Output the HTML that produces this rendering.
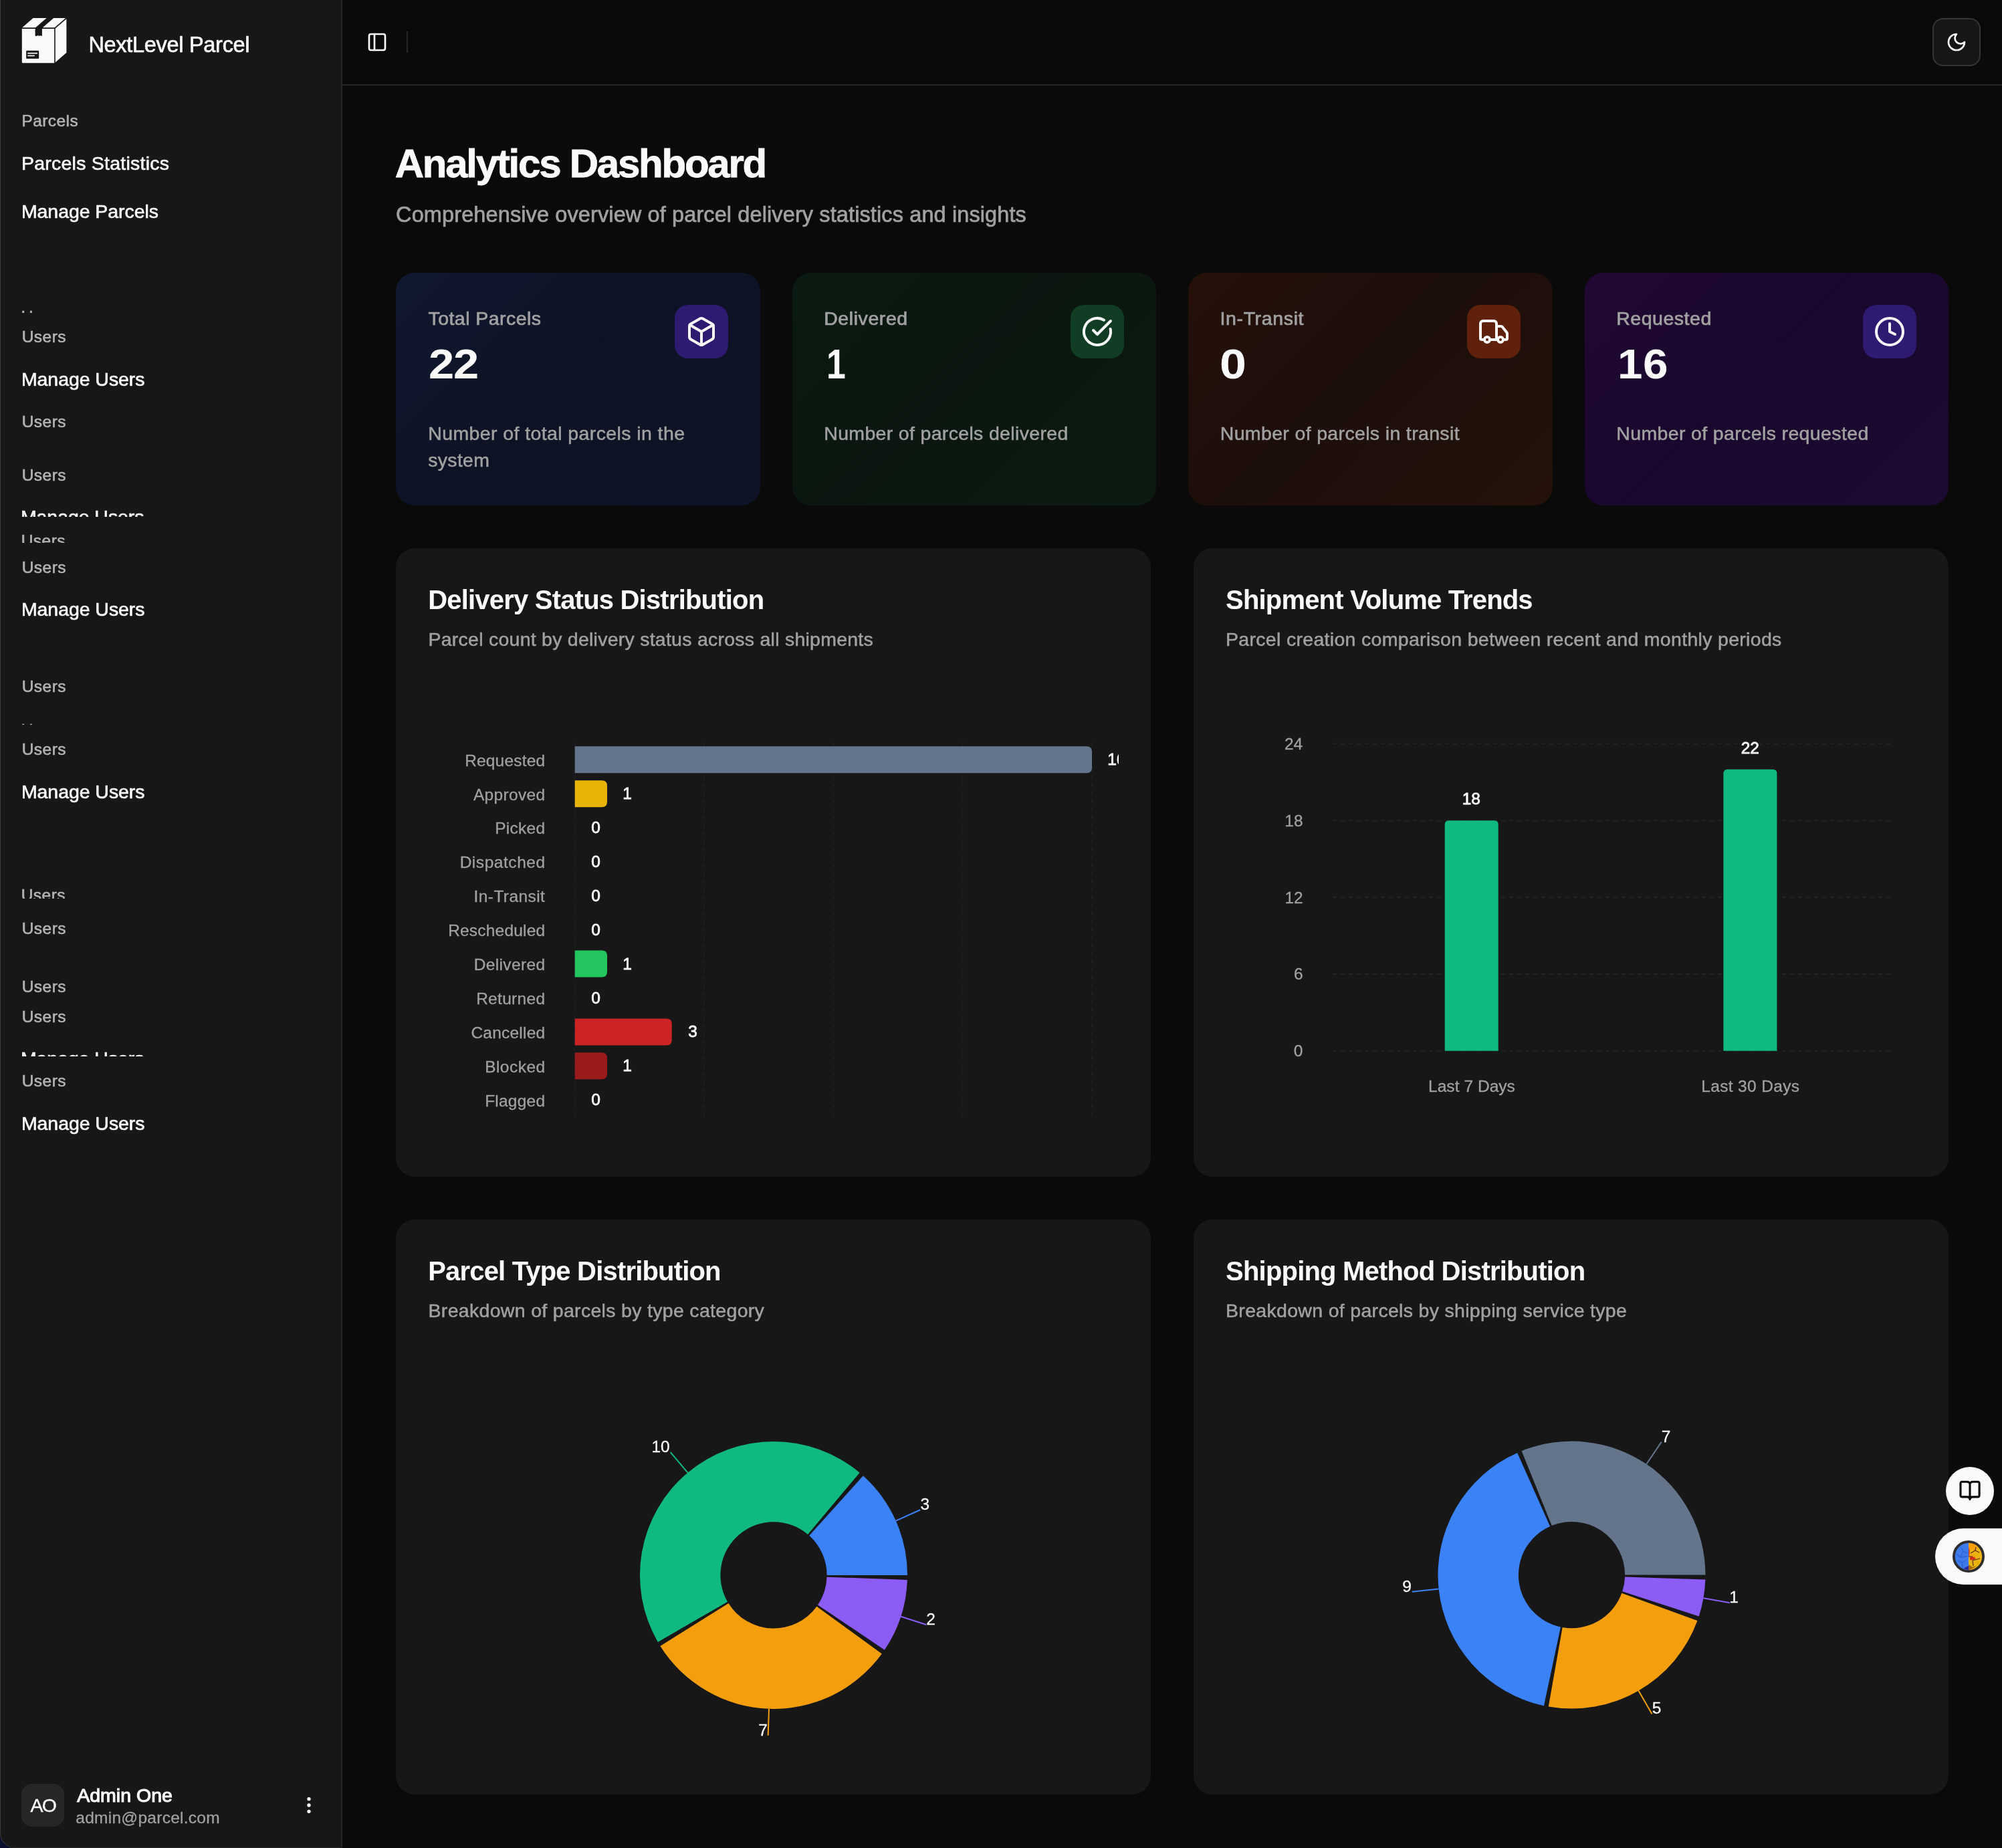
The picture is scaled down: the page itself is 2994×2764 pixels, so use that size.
<!DOCTYPE html>
<html lang="en">
<head>
<meta charset="utf-8">
<title>NextLevel Parcel - Analytics Dashboard</title>
<style>
*{box-sizing:border-box;margin:0;padding:0}
html,body{width:2994px;height:2764px;background:#0a0a0a}
body{overflow:hidden}
body{position:relative;will-change:transform;font-family:"Liberation Sans",Arial,Helvetica,sans-serif;color:#fafafa;-webkit-font-smoothing:antialiased}
.t{position:absolute;white-space:nowrap;margin:0;font-weight:400}
.abs{position:absolute}
aside{position:absolute;left:0;top:0;width:512px;height:2764px;background:#171717;border-right:2px solid #262626;border-left:1px solid #3a3a3a;border-bottom:1px solid #2c2c2c;border-bottom-left-radius:22px;overflow:hidden}
aside>*,aside nav>*{margin-left:-1px}
header{position:absolute;left:512px;top:0;width:2482px;height:128px;border-bottom:2px solid #262626}
main{position:absolute;left:0;top:0;width:2994px;height:2764px}
.card{position:absolute;border-radius:28px;overflow:hidden}
.chart{background:#171717}
svg{position:absolute;left:0;top:0;overflow:visible}
svg text{font-family:"Liberation Sans",Arial,Helvetica,sans-serif}
</style>
</head>
<body>
<div class="abs" style="left:0;top:2738px;width:26px;height:26px;background:#0c1130"></div>
<aside>
<svg class="abs" style="left:32px;top:26px" width="70" height="70" viewBox="0 0 70 70" aria-hidden="true">
<path d="M1.3 15.3 L17.5 1 L37.6 1 L21.2 15.3 Z" fill="#fafafa"/>
<path d="M31.8 15.3 L48.2 1 L66.2 1 L49.7 15.3 Z" fill="#fafafa"/>
<path d="M0.8 17 L20.6 17 L20.6 27.6 L22.4 27.9 L24.6 26.9 L26.8 27.8 L29.2 27.3 L30.9 27.9 L30.9 17 L49.2 17 L49.2 68.2 L2.3 68.2 Q0.8 68.2 0.8 66.7 Z" fill="#fafafa"/>
<path d="M50.8 16.6 L67.4 2.3 L67.4 52.7 L50.8 67.3 Z" fill="#fafafa"/>
<rect x="7.2" y="49.7" width="19" height="12" rx="1" fill="#171717"/>
<rect x="9" y="52.8" width="15.2" height="1.7" rx="0.8" fill="#fafafa"/>
<rect x="9" y="56.6" width="11" height="1.7" rx="0.8" fill="#fafafa"/>
</svg>
<div class="t" style="left:131.40px;top:50.79px;font-size:32.5px;line-height:32.5px;color:#fafafa;letter-spacing:-0.299px;-webkit-text-stroke:0.6px #fafafa;">NextLevel Parcel</div>
<nav>
<div class="t" style="left:31.54px;top:168.76px;font-size:24.5px;line-height:24.5px;color:#b3b3b3;letter-spacing:0.402px;-webkit-text-stroke:0.6px #b3b3b3;">Parcels</div>
<a class="t" style="left:30.92px;top:229.67px;font-size:28.5px;line-height:28.5px;color:#fafafa;letter-spacing:0.244px;-webkit-text-stroke:0.6px #fafafa;">Parcels Statistics</a>
<a class="t" style="left:30.92px;top:301.67px;font-size:28.5px;line-height:28.5px;color:#fafafa;letter-spacing:-0.072px;-webkit-text-stroke:0.6px #fafafa;">Manage Parcels</a>
<div class="abs" style="left:0;top:460px;width:500px;height:8px;overflow:hidden"><div class="t" style="left:31.66px;top:2.26px;font-size:24.5px;line-height:24.5px;color:#b3b3b3;letter-spacing:0.488px;-webkit-text-stroke:0.6px #b3b3b3;">Users</div></div>
<div class="t" style="left:31.66px;top:492.26px;font-size:24.5px;line-height:24.5px;color:#b3b3b3;letter-spacing:0.488px;-webkit-text-stroke:0.6px #b3b3b3;">Users</div>
<a class="t" style="left:30.92px;top:553.37px;font-size:28.5px;line-height:28.5px;color:#fafafa;letter-spacing:-0.065px;-webkit-text-stroke:0.6px #fafafa;">Manage Users</a>
<div class="t" style="left:31.66px;top:618.66px;font-size:24.5px;line-height:24.5px;color:#b3b3b3;letter-spacing:0.488px;-webkit-text-stroke:0.6px #b3b3b3;">Users</div>
<div class="t" style="left:31.66px;top:698.66px;font-size:24.5px;line-height:24.5px;color:#b3b3b3;letter-spacing:0.488px;-webkit-text-stroke:0.6px #b3b3b3;">Users</div>
<div class="abs" style="left:0;top:760px;width:500px;height:12.5px;overflow:hidden"><a class="t" style="left:30.92px;top:-1.13px;font-size:28.5px;line-height:28.5px;color:#fafafa;letter-spacing:-0.065px;-webkit-text-stroke:0.6px #fafafa;">Manage Users</a></div>
<div class="abs" style="left:0;top:796px;width:500px;height:16.299999999999955px;overflow:hidden"><div class="t" style="left:31.66px;top:0.76px;font-size:24.5px;line-height:24.5px;color:#b3b3b3;letter-spacing:0.488px;-webkit-text-stroke:0.6px #b3b3b3;">Users</div></div>
<div class="t" style="left:31.66px;top:837.06px;font-size:24.5px;line-height:24.5px;color:#b3b3b3;letter-spacing:0.488px;-webkit-text-stroke:0.6px #b3b3b3;">Users</div>
<a class="t" style="left:30.92px;top:897.47px;font-size:28.5px;line-height:28.5px;color:#fafafa;letter-spacing:-0.065px;-webkit-text-stroke:0.6px #fafafa;">Manage Users</a>
<div class="t" style="left:31.66px;top:1015.26px;font-size:24.5px;line-height:24.5px;color:#b3b3b3;letter-spacing:0.488px;-webkit-text-stroke:0.6px #b3b3b3;">Users</div>
<div class="abs" style="left:0;top:1078px;width:500px;height:6px;overflow:hidden"><div class="t" style="left:31.66px;top:1.86px;font-size:24.5px;line-height:24.5px;color:#b3b3b3;letter-spacing:0.488px;-webkit-text-stroke:0.6px #b3b3b3;">Users</div></div>
<div class="t" style="left:31.66px;top:1108.66px;font-size:24.5px;line-height:24.5px;color:#b3b3b3;letter-spacing:0.488px;-webkit-text-stroke:0.6px #b3b3b3;">Users</div>
<a class="t" style="left:30.92px;top:1169.67px;font-size:28.5px;line-height:28.5px;color:#fafafa;letter-spacing:-0.065px;-webkit-text-stroke:0.6px #fafafa;">Manage Users</a>
<div class="abs" style="left:0;top:1326px;width:500px;height:18px;overflow:hidden"><div class="t" style="left:31.66px;top:1.26px;font-size:24.5px;line-height:24.5px;color:#b3b3b3;letter-spacing:0.488px;-webkit-text-stroke:0.6px #b3b3b3;">Users</div></div>
<div class="t" style="left:31.66px;top:1376.86px;font-size:24.5px;line-height:24.5px;color:#b3b3b3;letter-spacing:0.488px;-webkit-text-stroke:0.6px #b3b3b3;">Users</div>
<div class="t" style="left:31.66px;top:1464.26px;font-size:24.5px;line-height:24.5px;color:#b3b3b3;letter-spacing:0.488px;-webkit-text-stroke:0.6px #b3b3b3;">Users</div>
<div class="t" style="left:31.66px;top:1508.66px;font-size:24.5px;line-height:24.5px;color:#b3b3b3;letter-spacing:0.488px;-webkit-text-stroke:0.6px #b3b3b3;">Users</div>
<div class="abs" style="left:0;top:1570px;width:500px;height:10px;overflow:hidden"><a class="t" style="left:30.92px;top:-1.03px;font-size:28.5px;line-height:28.5px;color:#fafafa;letter-spacing:-0.065px;-webkit-text-stroke:0.6px #fafafa;">Manage Users</a></div>
<div class="t" style="left:31.66px;top:1605.26px;font-size:24.5px;line-height:24.5px;color:#b3b3b3;letter-spacing:0.488px;-webkit-text-stroke:0.6px #b3b3b3;">Users</div>
<a class="t" style="left:30.92px;top:1665.97px;font-size:28.5px;line-height:28.5px;color:#fafafa;letter-spacing:-0.065px;-webkit-text-stroke:0.6px #fafafa;">Manage Users</a>
</nav>
<div class="abs" style="left:32px;top:2668px;width:64px;height:64px;border-radius:16px;background:#262626"></div>
<div class="t" style="left:44.60px;top:2685.87px;font-size:28.5px;line-height:28.5px;color:#fafafa;letter-spacing:-1.758px;-webkit-text-stroke:0.4px #fafafa;">AO</div>
<div class="t" style="left:114.20px;top:2670.67px;font-size:28.5px;line-height:28.5px;color:#fafafa;letter-spacing:0.017px;-webkit-text-stroke:1.1px #fafafa;">Admin One</div>
<div class="t" style="left:112.32px;top:2706.56px;font-size:24.5px;line-height:24.5px;color:#a1a1a1;letter-spacing:0.256px;-webkit-text-stroke:0.3px #a1a1a1;">admin@parcel.com</div>
<svg class="abs" style="left:446px;top:2684px" width="32" height="32" viewBox="0 0 24 24" fill="none" stroke="#fafafa" stroke-width="2" stroke-linecap="round" stroke-linejoin="round" aria-hidden="true"><circle cx="12" cy="12" r="1"/><circle cx="12" cy="5" r="1"/><circle cx="12" cy="19" r="1"/></svg>
</aside>
<header>
<svg class="abs" style="left:36px;top:47px" width="32" height="32" viewBox="0 0 24 24" fill="none" stroke="#fafafa" stroke-width="2" stroke-linecap="round" stroke-linejoin="round" aria-hidden="true"><rect width="18" height="18" x="3" y="3" rx="2"/><path d="M9 3v18"/></svg>
<div class="abs" style="left:96px;top:47px;width:2px;height:32px;background:#262626"></div>
<div class="abs" style="left:2378px;top:27px;width:72px;height:72px;border-radius:16px;background:#161616;border:2px solid #353535"></div>
<svg class="abs" style="left:2398px;top:47px" width="32" height="32" viewBox="0 0 24 24" fill="none" stroke="#fafafa" stroke-width="2" stroke-linecap="round" stroke-linejoin="round" aria-hidden="true"><path d="M12 3a6 6 0 0 0 9 9 9 9 0 1 1-9-9Z"/></svg>
</header>
<main>
<h1 class="t" style="left:590.70px;top:215.21px;font-size:60px;line-height:60px;color:#fafafa;letter-spacing:-2.239px;font-weight:700;-webkit-text-stroke:0.8px #fafafa;">Analytics Dashboard</h1>
<p class="t" style="left:592.08px;top:304.89px;font-size:32.5px;line-height:32.5px;color:#a1a1a1;letter-spacing:0.111px;-webkit-text-stroke:0.7px #a1a1a1;">Comprehensive overview of parcel delivery statistics and insights</p>
<section class="card" style="left:592px;top:408px;width:544.5px;height:348px;background:linear-gradient(135deg,#10182f 0%,#0e1225 45%,#0e1327 100%)">
<h3 class="t" style="left:48.43px;top:54.27px;font-size:28.5px;line-height:28.5px;color:#a1a1a1;letter-spacing:0.459px;-webkit-text-stroke:0.7px #a1a1a1;">Total Parcels</h3>
<div class="t" style="left:49.44px;top:105.27px;font-size:63px;line-height:63px;color:#fafafa;letter-spacing:-1.156px;font-weight:700;transform:scaleX(1.09);transform-origin:0 0;">22</div>
<p class="t" style="left:48.22px;top:225.97px;font-size:28.5px;line-height:28.5px;color:#a1a1a1;letter-spacing:0.397px;-webkit-text-stroke:0.5px #a1a1a1;">Number of total parcels in the</p>
<p class="t" style="left:48.29px;top:265.97px;font-size:28.5px;line-height:28.5px;color:#a1a1a1;letter-spacing:0.284px;-webkit-text-stroke:0.5px #a1a1a1;">system</p>
<div class="abs" style="left:416.5px;top:48px;width:80px;height:80px;border-radius:20px;background:#2e1a70"></div>
<svg class="abs" style="left:432.5px;top:64px" width="48" height="48" viewBox="0 0 24 24" fill="none" stroke="#fafafa" stroke-width="2" stroke-linecap="round" stroke-linejoin="round" aria-hidden="true"><path d="M21 8a2 2 0 0 0-1-1.73l-7-4a2 2 0 0 0-2 0l-7 4A2 2 0 0 0 3 8v8a2 2 0 0 0 1 1.73l7 4a2 2 0 0 0 2 0l7-4A2 2 0 0 0 21 16Z"/><path d="m3.3 7 8.7 5 8.7-5"/><path d="M12 22V12"/></svg>
</section>
<section class="card" style="left:1184.5px;top:408px;width:544.5px;height:348px;background:linear-gradient(135deg,#0b1a12 0%,#0a160f 45%,#0c1b12 100%)">
<h3 class="t" style="left:47.72px;top:54.27px;font-size:28.5px;line-height:28.5px;color:#a1a1a1;letter-spacing:0.572px;-webkit-text-stroke:0.7px #a1a1a1;">Delivered</h3>
<div class="t" style="left:51.40px;top:105.27px;font-size:63px;line-height:63px;color:#fafafa;font-weight:700;transform:scaleX(0.82);transform-origin:0 0;">1</div>
<p class="t" style="left:47.72px;top:225.97px;font-size:28.5px;line-height:28.5px;color:#a1a1a1;letter-spacing:0.331px;-webkit-text-stroke:0.5px #a1a1a1;">Number of parcels delivered</p>
<div class="abs" style="left:416.5px;top:48px;width:80px;height:80px;border-radius:20px;background:#113d25"></div>
<svg class="abs" style="left:432.5px;top:64px" width="48" height="48" viewBox="0 0 24 24" fill="none" stroke="#fafafa" stroke-width="2" stroke-linecap="round" stroke-linejoin="round" aria-hidden="true"><path d="M21.801 10A10 10 0 1 1 17 3.335"/><path d="m9 11 3 3L22 4"/></svg>
</section>
<section class="card" style="left:1777px;top:408px;width:544.5px;height:348px;background:linear-gradient(135deg,#26100a 0%,#1c0e0b 45%,#24120a 100%)">
<h3 class="t" style="left:47.44px;top:54.27px;font-size:28.5px;line-height:28.5px;color:#a1a1a1;letter-spacing:0.644px;-webkit-text-stroke:0.7px #a1a1a1;">In-Transit</h3>
<div class="t" style="left:47.19px;top:105.27px;font-size:63px;line-height:63px;color:#fafafa;font-weight:700;transform:scaleX(1.14);transform-origin:0 0;">0</div>
<p class="t" style="left:47.72px;top:225.97px;font-size:28.5px;line-height:28.5px;color:#a1a1a1;letter-spacing:0.347px;-webkit-text-stroke:0.5px #a1a1a1;">Number of parcels in transit</p>
<div class="abs" style="left:416.5px;top:48px;width:80px;height:80px;border-radius:20px;background:#5f210b"></div>
<svg class="abs" style="left:432.5px;top:64px" width="48" height="48" viewBox="0 0 24 24" fill="none" stroke="#fafafa" stroke-width="2" stroke-linecap="round" stroke-linejoin="round" aria-hidden="true"><path d="M14 18V6a2 2 0 0 0-2-2H4a2 2 0 0 0-2 2v11a1 1 0 0 0 1 1h2"/><path d="M15 18H9"/><path d="M19 18h2a1 1 0 0 0 1-1v-3.65a1 1 0 0 0-.22-.624l-3.48-4.35A1 1 0 0 0 17.52 8H14"/><circle cx="17" cy="18" r="2"/><circle cx="7" cy="18" r="2"/></svg>
</section>
<section class="card" style="left:2369.5px;top:408px;width:544.5px;height:348px;background:linear-gradient(135deg,#200833 0%,#1a072d 45%,#1d0a30 100%)">
<h3 class="t" style="left:47.72px;top:54.27px;font-size:28.5px;line-height:28.5px;color:#a1a1a1;letter-spacing:0.524px;-webkit-text-stroke:0.7px #a1a1a1;">Requested</h3>
<div class="t" style="left:49.56px;top:105.27px;font-size:63px;line-height:63px;color:#fafafa;letter-spacing:0.541px;font-weight:700;transform:scaleX(1.07);transform-origin:0 0;">16</div>
<p class="t" style="left:47.72px;top:225.97px;font-size:28.5px;line-height:28.5px;color:#a1a1a1;letter-spacing:0.365px;-webkit-text-stroke:0.5px #a1a1a1;">Number of parcels requested</p>
<div class="abs" style="left:416.5px;top:48px;width:80px;height:80px;border-radius:20px;background:#2e1a70"></div>
<svg class="abs" style="left:432.5px;top:64px" width="48" height="48" viewBox="0 0 24 24" fill="none" stroke="#fafafa" stroke-width="2" stroke-linecap="round" stroke-linejoin="round" aria-hidden="true"><circle cx="12" cy="12" r="10"/><polyline points="12 6 12 12 16 14"/></svg>
</section>
<section class="card chart" style="left:592px;top:820px;width:1129px;height:940px">
<h2 class="t" style="left:48.20px;top:57.34px;font-size:40px;line-height:40px;color:#fafafa;letter-spacing:-0.800px;font-weight:700;">Delivery Status Distribution</h2>
<p class="t" style="left:48.52px;top:122.47px;font-size:28.5px;line-height:28.5px;color:#a1a1a1;letter-spacing:0.248px;-webkit-text-stroke:0.5px #a1a1a1;">Parcel count by delivery status across all shipments</p>
<svg width="1129" height="939" viewBox="592 820 1129 939" role="img" aria-label="Delivery status bar chart">
<clipPath id="c1"><rect x="640" y="1090" width="1033" height="600"/></clipPath><g clip-path="url(#c1)">
<line x1="859.7" y1="1111.7" x2="859.7" y2="1670" stroke="#1e1e1e" stroke-width="2" stroke-dasharray="6 6"/>
<line x1="1053.0" y1="1111.7" x2="1053.0" y2="1670" stroke="#1e1e1e" stroke-width="2" stroke-dasharray="6 6"/>
<line x1="1246.3" y1="1111.7" x2="1246.3" y2="1670" stroke="#1e1e1e" stroke-width="2" stroke-dasharray="6 6"/>
<line x1="1439.7" y1="1111.7" x2="1439.7" y2="1670" stroke="#1e1e1e" stroke-width="2" stroke-dasharray="6 6"/>
<line x1="1633.0" y1="1111.7" x2="1633.0" y2="1670" stroke="#1e1e1e" stroke-width="2" stroke-dasharray="6 6"/>
<text x="695.14" y="1145.70" font-size="24.5" fill="#a1a1a1" letter-spacing="0.184" stroke="#a1a1a1" stroke-width="0.3">Requested</text>
<path d="M859.7 1116.3 H1625.0 Q1633.0 1116.3 1633.0 1124.3 V1148.3 Q1633.0 1156.3 1625.0 1156.3 H859.7 Z" fill="#64748b"/>
<text x="1656.14" y="1144.30" font-size="24.5" fill="#fafafa" stroke="#fafafa" stroke-width="0.8">16</text>
<text x="707.90" y="1196.59" font-size="24.5" fill="#a1a1a1" letter-spacing="0.330" stroke="#a1a1a1" stroke-width="0.3">Approved</text>
<path d="M859.7 1167.2 H900.0 Q908.0 1167.2 908.0 1175.2 V1199.2 Q908.0 1207.2 900.0 1207.2 H859.7 Z" fill="#eab308"/>
<text x="931.19" y="1195.19" font-size="24.5" fill="#fafafa" stroke="#fafafa" stroke-width="0.8">1</text>
<text x="740.14" y="1247.48" font-size="24.5" fill="#a1a1a1" letter-spacing="0.286" stroke="#a1a1a1" stroke-width="0.3">Picked</text>
<text x="884.24" y="1246.08" font-size="24.5" fill="#fafafa" stroke="#fafafa" stroke-width="0.8">0</text>
<text x="687.64" y="1298.37" font-size="24.5" fill="#a1a1a1" letter-spacing="0.548" stroke="#a1a1a1" stroke-width="0.3">Dispatched</text>
<text x="884.24" y="1296.97" font-size="24.5" fill="#fafafa" stroke="#fafafa" stroke-width="0.8">0</text>
<text x="708.60" y="1349.26" font-size="24.5" fill="#a1a1a1" letter-spacing="0.408" stroke="#a1a1a1" stroke-width="0.3">In-Transit</text>
<text x="884.24" y="1347.86" font-size="24.5" fill="#fafafa" stroke="#fafafa" stroke-width="0.8">0</text>
<text x="670.14" y="1400.15" font-size="24.5" fill="#a1a1a1" letter-spacing="0.197" stroke="#a1a1a1" stroke-width="0.3">Rescheduled</text>
<text x="884.24" y="1398.75" font-size="24.5" fill="#fafafa" stroke="#fafafa" stroke-width="0.8">0</text>
<text x="708.64" y="1451.04" font-size="24.5" fill="#a1a1a1" letter-spacing="0.365" stroke="#a1a1a1" stroke-width="0.3">Delivered</text>
<path d="M859.7 1421.6 H900.0 Q908.0 1421.6 908.0 1429.6 V1453.6 Q908.0 1461.6 900.0 1461.6 H859.7 Z" fill="#22c55e"/>
<text x="931.19" y="1449.64" font-size="24.5" fill="#fafafa" stroke="#fafafa" stroke-width="0.8">1</text>
<text x="712.14" y="1501.93" font-size="24.5" fill="#a1a1a1" letter-spacing="0.302" stroke="#a1a1a1" stroke-width="0.3">Returned</text>
<text x="884.24" y="1500.53" font-size="24.5" fill="#fafafa" stroke="#fafafa" stroke-width="0.8">0</text>
<text x="704.38" y="1552.82" font-size="24.5" fill="#a1a1a1" letter-spacing="0.224" stroke="#a1a1a1" stroke-width="0.3">Cancelled</text>
<path d="M859.7 1523.4 H996.7 Q1004.7 1523.4 1004.7 1531.4 V1555.4 Q1004.7 1563.4 996.7 1563.4 H859.7 Z" fill="#cc2424"/>
<text x="1029.23" y="1551.42" font-size="24.5" fill="#fafafa" stroke="#fafafa" stroke-width="0.8">3</text>
<text x="725.14" y="1603.71" font-size="24.5" fill="#a1a1a1" letter-spacing="0.472" stroke="#a1a1a1" stroke-width="0.3">Blocked</text>
<path d="M859.7 1574.3 H900.0 Q908.0 1574.3 908.0 1582.3 V1606.3 Q908.0 1614.3 900.0 1614.3 H859.7 Z" fill="#991b1b"/>
<text x="931.19" y="1602.31" font-size="24.5" fill="#fafafa" stroke="#fafafa" stroke-width="0.8">1</text>
<text x="725.14" y="1654.60" font-size="24.5" fill="#a1a1a1" letter-spacing="0.227" stroke="#a1a1a1" stroke-width="0.3">Flagged</text>
<text x="884.24" y="1653.20" font-size="24.5" fill="#fafafa" stroke="#fafafa" stroke-width="0.8">0</text>
</g></svg>
</section>
<section class="card chart" style="left:1785px;top:820px;width:1129px;height:940px">
<h2 class="t" style="left:48.10px;top:57.34px;font-size:40px;line-height:40px;color:#fafafa;letter-spacing:-0.838px;font-weight:700;">Shipment Volume Trends</h2>
<p class="t" style="left:48.02px;top:122.47px;font-size:28.5px;line-height:28.5px;color:#a1a1a1;letter-spacing:0.310px;-webkit-text-stroke:0.5px #a1a1a1;">Parcel creation comparison between recent and monthly periods</p>
<svg width="1129" height="939" viewBox="1785 820 1129 939" role="img" aria-label="Shipment volume bar chart">
<line x1="1993" y1="1571.7" x2="2827.6" y2="1571.7" stroke="#222222" stroke-width="2" stroke-dasharray="6 6"/>
<text x="1934.76" y="1580.10" font-size="24.5" fill="#a1a1a1" stroke="#a1a1a1" stroke-width="0.3">0</text>
<line x1="1993" y1="1456.9" x2="2827.6" y2="1456.9" stroke="#222222" stroke-width="2" stroke-dasharray="6 6"/>
<text x="1934.88" y="1465.30" font-size="24.5" fill="#a1a1a1" stroke="#a1a1a1" stroke-width="0.3">6</text>
<line x1="1993" y1="1342.1" x2="2827.6" y2="1342.1" stroke="#222222" stroke-width="2" stroke-dasharray="6 6"/>
<text x="1921.41" y="1350.50" font-size="24.5" fill="#a1a1a1" stroke="#a1a1a1" stroke-width="0.3">12</text>
<line x1="1993" y1="1227.3" x2="2827.6" y2="1227.3" stroke="#222222" stroke-width="2" stroke-dasharray="6 6"/>
<text x="1921.28" y="1235.70" font-size="24.5" fill="#a1a1a1" stroke="#a1a1a1" stroke-width="0.3">18</text>
<line x1="1993" y1="1112.5" x2="2827.6" y2="1112.5" stroke="#222222" stroke-width="2" stroke-dasharray="6 6"/>
<text x="1920.92" y="1120.90" font-size="24.5" fill="#a1a1a1" stroke="#a1a1a1" stroke-width="0.3">24</text>
<path d="M2160.7 1571.7 V1233.3 Q2160.7 1227.3 2166.7 1227.3 H2234.7 Q2240.7 1227.3 2240.7 1233.3 V1571.7 Z" fill="#10b981"/>
<text x="2186.67" y="1203.30" font-size="24.5" fill="#fafafa" stroke="#fafafa" stroke-width="0.8">18</text>
<text x="2136.04" y="1632.60" font-size="24.5" fill="#a1a1a1" letter-spacing="0.046" stroke="#a1a1a1" stroke-width="0.3">Last 7 Days</text>
<path d="M2577.4 1571.7 V1156.8 Q2577.4 1150.8 2583.4 1150.8 H2651.4 Q2657.4 1150.8 2657.4 1156.8 V1571.7 Z" fill="#10b981"/>
<text x="2603.74" y="1126.77" font-size="24.5" fill="#fafafa" stroke="#fafafa" stroke-width="0.8">22</text>
<text x="2544.24" y="1632.60" font-size="24.5" fill="#a1a1a1" letter-spacing="0.351" stroke="#a1a1a1" stroke-width="0.3">Last 30 Days</text>
</svg>
</section>
<section class="card chart" style="left:592px;top:1824px;width:1129px;height:860px">
<h2 class="t" style="left:48.20px;top:57.04px;font-size:40px;line-height:40px;color:#fafafa;letter-spacing:-0.817px;font-weight:700;">Parcel Type Distribution</h2>
<p class="t" style="left:48.52px;top:121.87px;font-size:28.5px;line-height:28.5px;color:#a1a1a1;letter-spacing:0.312px;-webkit-text-stroke:0.5px #a1a1a1;">Breakdown of parcels by type category</p>
<svg width="1129" height="859" viewBox="592 1824 1129 859" role="img" aria-label="Parcel type donut chart">
<path d="M1357.00 2355.90 A200 200 0 0 0 1290.83 2207.27 L1210.26 2296.75 A79.6 79.6 0 0 1 1236.60 2355.90 Z" fill="#3b82f6"/>
<path d="M1339.71 2274.55 L1376.25 2258.28" stroke="#3b82f6" stroke-width="2" fill="none"/>
<text x="1376.59" y="2258.28" font-size="24.5" fill="#fafafa" stroke="#fafafa" stroke-width="0.3">3</text>
<path d="M1285.56 2202.69 A200 200 0 0 0 983.79 2455.90 L1088.06 2395.70 A79.6 79.6 0 0 1 1208.17 2294.92 Z" fill="#10b981"/>
<path d="M1028.44 2202.69 L1002.73 2172.05" stroke="#10b981" stroke-width="2" fill="none"/>
<text x="974.39" y="2172.05" font-size="24.5" fill="#fafafa" stroke="#fafafa" stroke-width="0.3">10</text>
<path d="M987.39 2461.88 A200 200 0 0 0 1318.80 2473.46 L1221.40 2402.69 A79.6 79.6 0 0 1 1089.50 2398.08 Z" fill="#f59e0b"/>
<path d="M1150.02 2555.78 L1148.62 2595.75" stroke="#f59e0b" stroke-width="2" fill="none"/>
<text x="1134.13" y="2595.75" font-size="24.5" fill="#fafafa" stroke="#fafafa" stroke-width="0.3">7</text>
<path d="M1322.81 2467.74 A200 200 0 0 0 1356.88 2362.88 L1236.55 2358.68 A79.6 79.6 0 0 1 1222.99 2400.41 Z" fill="#8b5cf6"/>
<path d="M1347.21 2417.70 L1385.25 2430.06" stroke="#8b5cf6" stroke-width="2" fill="none"/>
<text x="1385.23" y="2430.06" font-size="24.5" fill="#fafafa" stroke="#fafafa" stroke-width="0.3">2</text>
</svg></section>
<section class="card chart" style="left:1785px;top:1824px;width:1129px;height:860px">
<h2 class="t" style="left:48.10px;top:57.04px;font-size:40px;line-height:40px;color:#fafafa;letter-spacing:-0.811px;font-weight:700;">Shipping Method Distribution</h2>
<p class="t" style="left:48.02px;top:121.87px;font-size:28.5px;line-height:28.5px;color:#a1a1a1;letter-spacing:0.312px;-webkit-text-stroke:0.5px #a1a1a1;">Breakdown of parcels by shipping service type</p>
<svg width="1129" height="859" viewBox="1785 1824 1129 859" role="img" aria-label="Shipping method donut chart">
<path d="M2550.50 2355.60 A200 200 0 0 0 2275.58 2170.16 L2320.68 2281.80 A79.6 79.6 0 0 1 2430.10 2355.60 Z" fill="#64748b"/>
<path d="M2462.34 2189.79 L2484.71 2156.63" stroke="#64748b" stroke-width="2" fill="none"/>
<text x="2484.68" y="2156.63" font-size="24.5" fill="#fafafa" stroke="#fafafa" stroke-width="0.3">7</text>
<path d="M2269.15 2172.89 A200 200 0 0 0 2308.92 2551.23 L2333.95 2433.46 A79.6 79.6 0 0 1 2318.12 2282.88 Z" fill="#3b82f6"/>
<path d="M2151.60 2376.51 L2111.81 2380.69" stroke="#3b82f6" stroke-width="2" fill="none"/>
<text x="2097.32" y="2380.69" font-size="24.5" fill="#fafafa" stroke="#fafafa" stroke-width="0.3">9</text>
<path d="M2315.77 2552.56 A200 200 0 0 0 2538.44 2424.00 L2425.30 2382.82 A79.6 79.6 0 0 1 2336.68 2433.99 Z" fill="#f59e0b"/>
<path d="M2450.50 2528.81 L2470.50 2563.45" stroke="#f59e0b" stroke-width="2" fill="none"/>
<text x="2470.72" y="2563.45" font-size="24.5" fill="#fafafa" stroke="#fafafa" stroke-width="0.3">5</text>
<path d="M2540.71 2417.40 A200 200 0 0 0 2550.38 2362.58 L2430.05 2358.38 A79.6 79.6 0 0 1 2426.20 2380.20 Z" fill="#8b5cf6"/>
<path d="M2547.46 2390.33 L2586.85 2397.28" stroke="#8b5cf6" stroke-width="2" fill="none"/>
<text x="2586.22" y="2397.28" font-size="24.5" fill="#fafafa" stroke="#fafafa" stroke-width="0.3">1</text>
</svg></section>
</main>
<div class="abs" style="left:2910px;top:2194px;width:72px;height:72px;border-radius:36px;background:#fafafa"></div>
<svg class="abs" style="left:2928px;top:2212px" width="36" height="36" viewBox="0 0 36 36" fill="none" stroke="#0a0a0a" stroke-width="3.1" stroke-linecap="round" stroke-linejoin="round" aria-hidden="true"><path d="M18 7.6 Q17.4 4.2 13.6 4.2 H6.4 Q4 4.2 4 6.6 V24.5 Q4 26.9 6.4 26.9 H14 Q17.4 26.9 18 30.6 Q18.6 26.9 22 26.9 H29.7 Q32.1 26.9 32.1 24.5 V6.6 Q32.1 4.2 29.7 4.2 H22.4 Q18.6 4.2 18 7.6 V30"/></svg>
<div class="abs" style="left:2894px;top:2286px;width:100px;height:84px;border-radius:42px 0 0 42px;background:#fafafa"></div>
<svg class="abs" style="left:2920px;top:2304px" width="48" height="48" viewBox="0 0 48 48" aria-hidden="true">
<circle cx="24" cy="24" r="24" fill="#2d2d2d"/>
<path d="M24 3.8 A20.2 20.2 0 0 0 24 44.2 Z" fill="#3c7be8"/>
<path d="M24 3.8 A20.2 20.2 0 0 1 24 44.2 Z" fill="#ecb40f"/>
<path d="M24 4 Q33 4 38 10 L33 15 L27 13 L24 17 Z" fill="#f59f0b"/>
<path d="M24 17 L30 21 L36 22 L33 27 L27 26 L24 27 Z" fill="#f4a40c"/>
<path d="M26 25 Q31 23 35 27 Q31 30 26 29 Z" fill="#cf2a1f"/>
<path d="M24 10 L26 16 L24.6 24 L24 24 Z" fill="#d53a1c"/>
<path d="M24 36 L30 40 L36 38 L40 32 Q36 41 24 44.2 Z" fill="#a4650f"/>
<path d="M35 10 L34 15 L27 19 M34 15 L40 18 M30 30 L41 27 M30 30 L31 38 M24 24 L30 24" stroke="#5b2a0c" stroke-width="1.2" fill="none"/>
<path d="M12 9 L16 16 L23 19 M6 20 L12 25 L22 24 M8 30 L14 33 L20 30 M14 33 L15 41 M16 16 L12 25" stroke="#2f62d3" stroke-width="1.3" fill="none"/>
<path d="M24 38 L24 44 Q20 44 16 42 Z" fill="#3026a8"/>
</svg>
</body>
</html>
